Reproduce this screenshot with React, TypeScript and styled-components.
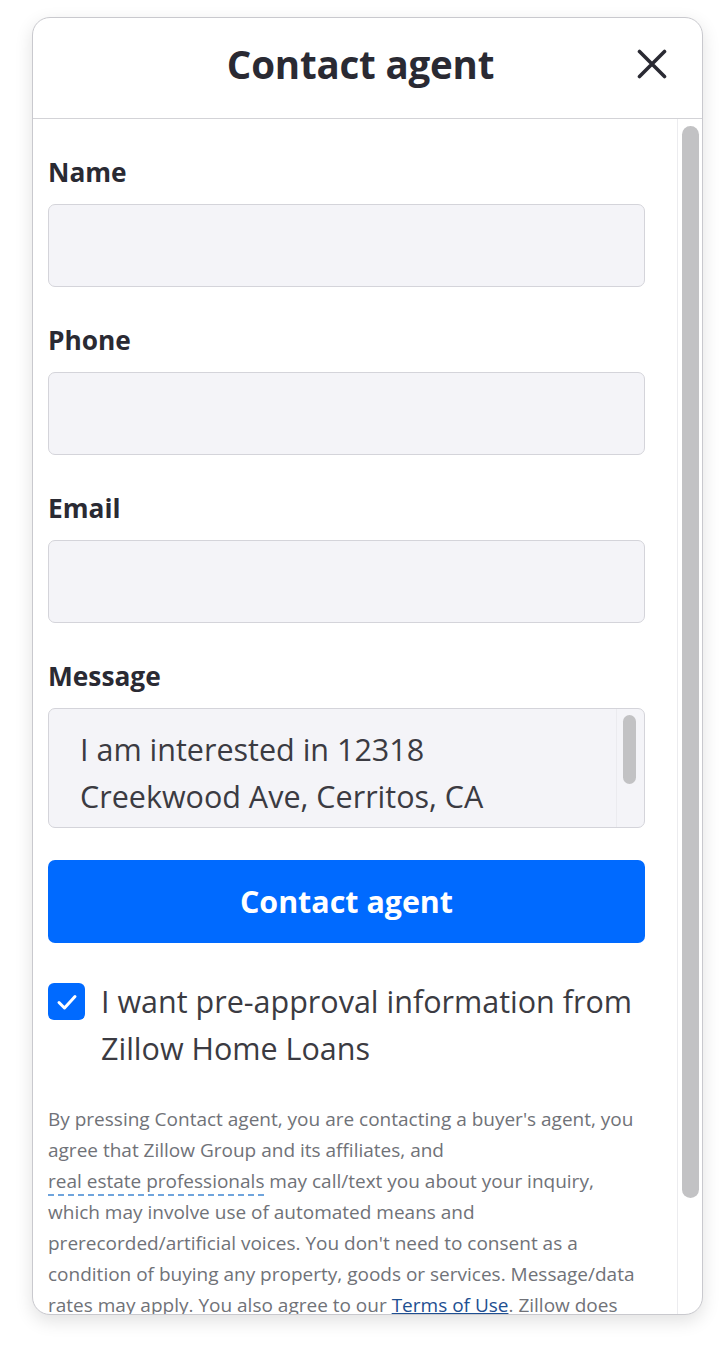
import React from 'react';
import styled, { createGlobalStyle } from 'styled-components';

const GlobalStyle = createGlobalStyle`
  html, body {
    margin: 0;
    padding: 0;
    background: #fff;
    font-family: "Open Sans", "Noto Sans", sans-serif;
  }
`;

const Page = styled.div`
  padding: 17px 17px 34px 32px;
`;

const Card = styled.div`
  height: 1296px;
  display: flex;
  flex-direction: column;
  border: 1px solid #c9c9ce;
  border-radius: 18px;
  overflow: hidden;
  background: #fff;
  box-shadow: 0 6px 18px rgba(0, 0, 0, 0.12);
`;

const Header = styled.header`
  flex: none;
  box-sizing: border-box;
  height: 101px;
  padding-bottom: 8px;
  display: grid;
  grid-template-columns: 70px 1fr 70px;
  align-items: center;
  border-bottom: 1px solid #d3d3d7;
`;

const Title = styled.h1`
  grid-column: 2;
  margin: 0;
  padding-right: 14px;
  text-align: center;
  font-size: 38.5px;
  font-weight: 700;
  color: #2a2a33;
  letter-spacing: -0.2px;
`;

const CloseButton = styled.button`
  grid-column: 3;
  justify-self: start;
  width: 40px;
  height: 40px;
  padding: 0;
  border: none;
  background: none;
  display: flex;
  align-items: center;
  justify-content: center;
  cursor: pointer;
`;

const Body = styled.div`
  flex: 1;
  min-height: 0;
  display: flex;
`;

const ScrollArea = styled.div`
  flex: 1;
  overflow: hidden;
  padding: 38px 32px 20px 15px;
`;

const Track = styled.div`
  flex: none;
  width: 25px;
  box-sizing: border-box;
  padding: 7px 3px 0 4px;
  border-left: 1px solid #ececef;
`;

const Thumb = styled.div<{ $h: number }>`
  height: ${(p) => p.$h}px;
  border-radius: 10px;
  background: #c2c2c4;
`;

const Field = styled.div`
  display: flex;
  flex-direction: column;
  gap: 17px;
  margin-bottom: 38px;
`;

const Label = styled.label`
  font-size: 26.3px;
  line-height: 30px;
  font-weight: 700;
  color: #2a2a33;
`;

const Input = styled.input`
  box-sizing: border-box;
  height: 83px;
  width: 100%;
  border: 1px solid #d4d4da;
  border-radius: 7px;
  background: #f4f4f8;
  font-family: inherit;
  font-size: 30px;
  padding: 0 30px;
`;

const MessageWrap = styled.div`
  box-sizing: border-box;
  height: 120px;
  display: flex;
  border: 1px solid #d4d4da;
  border-radius: 7px;
  background: #f4f4f8;
  overflow: hidden;
`;

const MessageBox = styled.textarea`
  flex: 1;
  min-width: 0;
  resize: none;
  border: none;
  outline: none;
  background: transparent;
  font-family: inherit;
  font-size: 30.5px;
  line-height: 47px;
  color: #3b3b42;
  padding: 17px 0 0 31px;
  overflow: hidden;
`;

const MiniTrack = styled.div`
  flex: none;
  width: 28px;
  box-sizing: border-box;
  padding: 6px 8px 0 6px;
  border-left: 1px solid #ebebef;
`;

const SubmitButton = styled.button`
  display: block;
  width: 100%;
  height: 83px;
  margin-top: -6px;
  border: none;
  border-radius: 7px;
  background: #006aff;
  color: #fff;
  font-family: inherit;
  font-size: 30.4px;
  font-weight: 700;
  cursor: pointer;
`;

const CheckRow = styled.label`
  display: flex;
  align-items: flex-start;
  gap: 16px;
  margin-top: 35px;
`;

const CheckBox = styled.span`
  flex: none;
  width: 37px;
  height: 37px;
  margin-top: 5px;
  border-radius: 6px;
  background: #006aff;
  display: flex;
  align-items: center;
  justify-content: center;
`;

const CheckText = styled.span`
  font-size: 30.5px;
  line-height: 47px;
  color: #3b3b42;
`;

const Disclaimer = styled.p`
  margin: 32px 0 0;
  font-size: 19px;
  line-height: 31px;
  color: #707278;
`;

const Tip = styled.span`
  border-bottom: 2px dashed #6fa4dc;
`;

const Link = styled.a`
  color: #1e4f91;
  text-decoration: underline;
`;

const App: React.FC = () => {
  return (
    <Page>
      <GlobalStyle />
      <Card>
        <Header>
          <Title>Contact agent</Title>
          <CloseButton aria-label="Close">
            <svg width="30" height="30" viewBox="0 0 30 30">
              <path d="M2.5 2.5 L27.5 27.5 M27.5 2.5 L2.5 27.5" stroke="#2a2a33" strokeWidth="3.6" strokeLinecap="round" />
            </svg>
          </CloseButton>
        </Header>
        <Body>
          <ScrollArea>
            <Field>
              <Label>Name</Label>
              <Input type="text" />
            </Field>
            <Field>
              <Label>Phone</Label>
              <Input type="tel" />
            </Field>
            <Field>
              <Label>Email</Label>
              <Input type="email" />
            </Field>
            <Field>
              <Label>Message</Label>
              <MessageWrap>
                <MessageBox defaultValue={'I am interested in 12318\nCreekwood Ave, Cerritos, CA\n90703.'} />
                <MiniTrack>
                  <Thumb $h={69} />
                </MiniTrack>
              </MessageWrap>
            </Field>
            <SubmitButton>Contact agent</SubmitButton>
            <CheckRow>
              <CheckBox>
                <svg width="24" height="24" viewBox="0 0 24 24">
                  <path d="M4 12.5 L9.5 18 L20 6.5" fill="none" stroke="#fff" strokeWidth="3" strokeLinecap="round" strokeLinejoin="round" />
                </svg>
              </CheckBox>
              <CheckText>I want pre-approval information from Zillow Home Loans</CheckText>
            </CheckRow>
            <Disclaimer>
              By pressing Contact agent, you are contacting a buyer's agent, you agree that Zillow Group and its affiliates, and
              <br />
              <Tip>real estate professionals</Tip> may call/text you about your inquiry, which may involve use of automated
              means and prerecorded/artificial voices. You don't need to consent as a condition of buying any property, goods
              or services. Message/data rates may apply. You also agree to our <Link href="#">Terms of Use</Link>. Zillow does
              not endorse any real estate professionals. We may share information about your recent and future site activity
              with your agent to help them understand what you're looking for in a home.
            </Disclaimer>
          </ScrollArea>
          <Track>
            <Thumb $h={1072} />
          </Track>
        </Body>
      </Card>
    </Page>
  );
};

export default App;
